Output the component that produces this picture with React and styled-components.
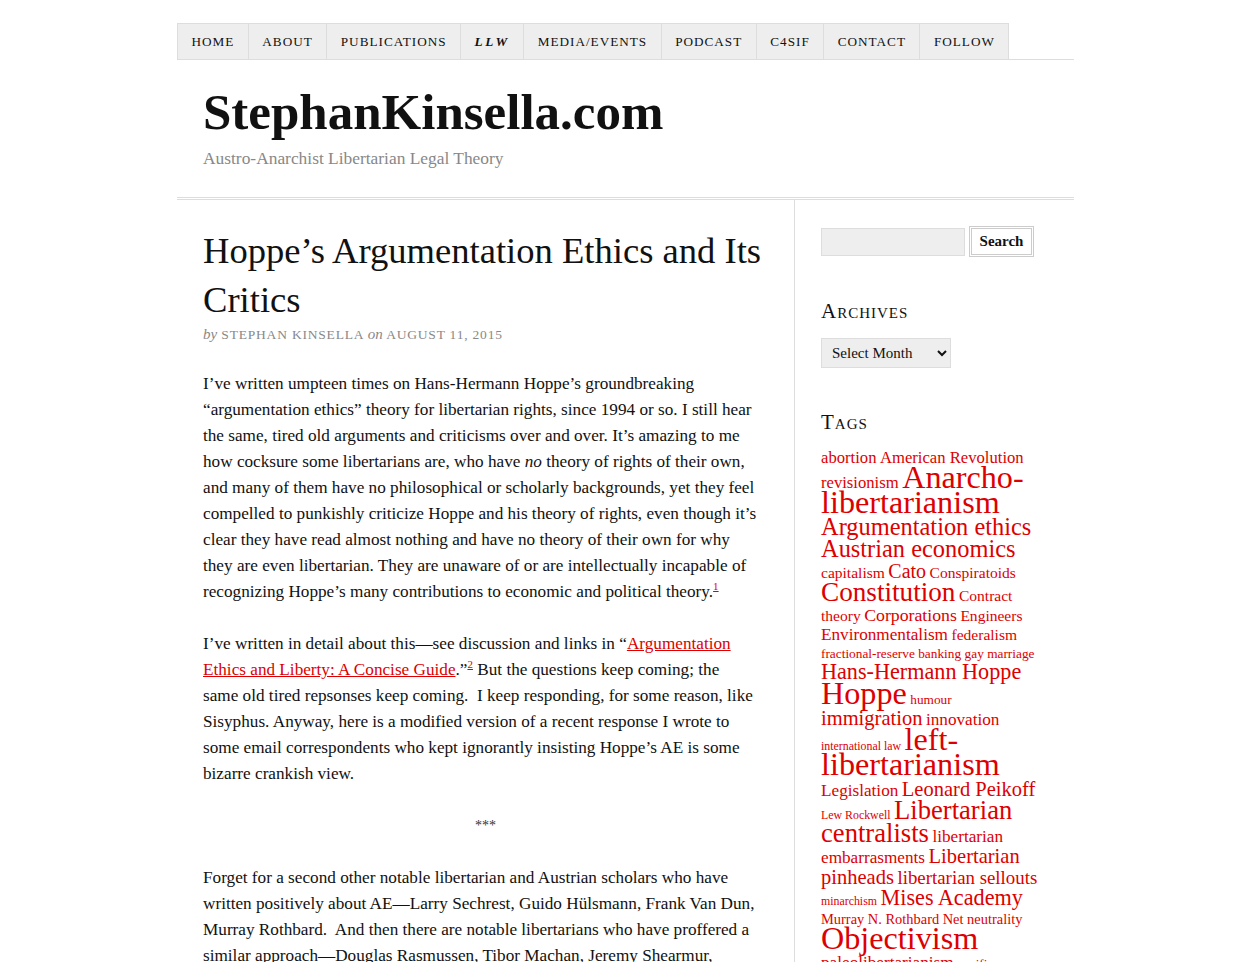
import styled, { createGlobalStyle } from "styled-components";

const GlobalStyle = createGlobalStyle`
    body {
        margin: 0;
        background: #fff;
        color: #111;
        font-family: "Liberation Serif", "Times New Roman", serif;
    }
`;

const Page = styled.div`
    width: 897px;
    margin: 0 auto;
    padding-top: 23px;
`;

const Nav = styled.ul`
    display: flex;
    list-style: none;
    margin: 0;
    padding: 0;
    border-bottom: 1px solid #ddd;
`;

const NavItem = styled.li`
    background: #eee;
    border-top: 1px solid #ddd;
    border-left: 1px solid #ddd;
    &:last-child {
        border-right: 1px solid #ddd;
    }
`;

const NavLink = styled.a`
    display: block;
    padding: 0 13.5px;
    line-height: 35px;
    font-size: 13.2px;
    letter-spacing: ${(props) => (props.bold ? "2.6px" : "1px")};
    text-transform: uppercase;
    color: #111;
    text-decoration: none;
    font-weight: ${(props) => (props.bold ? "bold" : "normal")};
    font-style: ${(props) => (props.bold ? "italic" : "normal")};
`;

const Header = styled.header`
    padding: 22px 26px 27px;
    border-bottom: 3px double #ddd;
`;

const SiteTitle = styled.div`
    font-size: 51px;
    line-height: 61px;
    font-weight: bold;
    color: #111;
`;

const Tagline = styled.div`
    margin-top: 3px;
    font-size: 17.4px;
    line-height: 24px;
    color: #888;
`;

const Columns = styled.div`
    display: flex;
    align-items: stretch;
`;

const Content = styled.main`
    width: 565px;
    padding: 26px 26px 0;
    border-right: 1px solid #ddd;
`;

const PostTitle = styled.h1`
    margin: 0;
    font-size: 36.6px;
    line-height: 49px;
    font-weight: normal;
`;

const Byline = styled.div`
    font-size: 13.5px;
    line-height: 20px;
    color: #888;
    letter-spacing: 0.8px;
    text-transform: uppercase;

    em {
        text-transform: none;
        letter-spacing: 0;
        font-size: 15px;
    }
`;

const Body = styled.div`
    margin-top: 26px;
    font-size: 17.2px;
    line-height: 26px;

    p {
        max-width: 555px;
        margin: 0 0 26px;
    }
`;

const Separator = styled.p`
    text-align: center;
    font-size: 14px;
    color: #333;
    && {
        max-width: none;
    }
`;

const TextLink = styled.a`
    color: #d00;
    text-decoration: underline;
`;

const Note = styled.sup`
    font-size: 11px;
    line-height: 0;
    a {
        color: #d00;
    }
`;

const Sidebar = styled.aside`
    width: 228px;
    padding: 26px 0 0 26px;
`;

const SearchForm = styled.form`
    display: flex;
    align-items: center;
    gap: 4px;
`;

const SearchInput = styled.input`
    box-sizing: border-box;
    width: 144px;
    height: 28px;
    background: #eee;
    border: 1px solid #ddd;
    font-family: inherit;
`;

const SearchButton = styled.button`
    box-sizing: border-box;
    width: 65px;
    height: 31px;
    background: #fff;
    border: 3px double #ccc;
    font-family: inherit;
    font-weight: bold;
    font-size: 15px;
    color: #111;
    padding: 0;
`;

const WidgetTitle = styled.h3`
    margin: 41px 0 14px;
    font-size: 21px;
    line-height: 26px;
    font-weight: normal;
    font-variant: small-caps;
    letter-spacing: 1px;
`;

const MonthSelect = styled.select`
    width: 130px;
    height: 30px;
    background-color: #eee;
    border: 1px solid #ddd;
    font-family: inherit;
    font-size: 15px;
    color: #111;
    padding: 0 6px;
`;

const Cloud = styled.div`
    margin-top: 13px;
    font-size: 14px;
    line-height: 18px;
`;

const Tag = styled.a`
    color: #d00;
    text-decoration: none;
`;

const navItems = [
    "Home",
    "About",
    "Publications",
    "LLW",
    "Media/Events",
    "Podcast",
    "C4SIF",
    "Contact",
    "Follow",
];

// sizes read off the reference cloud, then widened for the narrower face
const tags = [
    ["abortion", 15],
    ["American Revolution revisionism", 15],
    ["Anarcho-libertarianism", 29],
    ["Argumentation ethics", 22],
    ["Austrian economics", 22],
    ["capitalism", 14],
    ["Cato", 18],
    ["Conspiratoids", 14],
    ["Constitution", 24.5],
    ["Contract theory", 14],
    ["Corporations", 16],
    ["Engineers", 14],
    ["Environmentalism", 15.5],
    ["federalism", 14],
    ["fractional-reserve banking", 12],
    ["gay marriage", 12],
    ["Hans-Hermann Hoppe", 20],
    ["Hoppe", 29],
    ["humour", 12],
    ["immigration", 18.5],
    ["innovation", 15.5],
    ["international law", 10.7],
    ["left-libertarianism", 29],
    ["Legislation", 15.5],
    ["Leonard Peikoff", 18.5],
    ["Lew Rockwell", 10.7],
    ["Libertarian centralists", 24],
    ["libertarian embarrasments", 15.5],
    ["Libertarian pinheads", 18.5],
    ["libertarian sellouts", 17],
    ["minarchism", 10.7],
    ["Mises Academy", 20],
    ["Murray N. Rothbard", 13],
    ["Net neutrality", 13],
    ["Objectivism", 29],
    ["paleolibertarianism", 15.5],
    ["pacifism", 12],
];

const App = () => {
    return (
        <>
            <GlobalStyle />
            <Page>
                <Nav>
                    {navItems.map((item) => (
                        <NavItem key={item}>
                            <NavLink href="#" bold={item === "LLW"}>{item}</NavLink>
                        </NavItem>
                    ))}
                </Nav>
                <Header>
                    <SiteTitle>StephanKinsella.com</SiteTitle>
                    <Tagline>Austro-Anarchist Libertarian Legal Theory</Tagline>
                </Header>
                <Columns>
                    <Content>
                        <PostTitle>Hoppe’s Argumentation Ethics and Its Critics</PostTitle>
                        <Byline><em>by</em> Stephan Kinsella <em>on</em> August 11, 2015</Byline>
                        <Body>
                            <p>
                                I’ve written umpteen times on Hans-Hermann Hoppe’s groundbreaking “argumentation ethics” theory for libertarian rights, since 1994 or so. I still hear the same, tired old arguments and criticisms over and over. It’s amazing to me how cocksure some libertarians are, who have <em>no</em> theory of rights of their own, and many of them have no philosophical or scholarly backgrounds, yet they feel compelled to punkishly criticize Hoppe and his theory of rights, even though it’s clear they have read almost nothing and have no theory of their own for why they are even libertarian. They are unaware of or are intellectually incapable of recognizing Hoppe’s many contributions to economic and political theory.<Note><a href="#">1</a></Note>
                            </p>
                            <p>
                                I’ve written in detail about this—see discussion and links in “<TextLink href="#">Argumentation Ethics and Liberty: A Concise Guide</TextLink>.”<Note><a href="#">2</a></Note> But the questions keep coming; the same old tired repsonses keep coming.{"\u00a0"} I keep responding, for some reason, like Sisyphus. Anyway, here is a modified version of a recent response I wrote to some email correspondents who kept ignorantly insisting Hoppe’s AE is some bizarre crankish view.
                            </p>
                            <Separator>***</Separator>
                            <p>
                                Forget for a second other notable libertarian and Austrian scholars who have written positively about AE—Larry Sechrest, Guido Hülsmann, Frank Van Dun, Murray Rothbard.{"\u00a0"} And then there are notable libertarians who have proffered a similar approach—Douglas Rasmussen, Tibor Machan, Jeremy Shearmur, Roger Pilon, Alan Gewirth, and others.
                            </p>
                        </Body>
                    </Content>
                    <Sidebar>
                        <SearchForm onSubmit={(e) => e.preventDefault()}>
                            <SearchInput type="text" />
                            <SearchButton type="submit">Search</SearchButton>
                        </SearchForm>
                        <WidgetTitle>Archives</WidgetTitle>
                        <MonthSelect defaultValue="">
                            <option value="">Select Month</option>
                        </MonthSelect>
                        <WidgetTitle>Tags</WidgetTitle>
                        <Cloud>
                            {tags.map(([name, size]) => (
                                <span key={name}>
                                    <Tag href="#" style={{ fontSize: `${size * 1.11}px` }}>{name}</Tag>{" "}
                                </span>
                            ))}
                        </Cloud>
                    </Sidebar>
                </Columns>
            </Page>
        </>
    );
};

export default App;
